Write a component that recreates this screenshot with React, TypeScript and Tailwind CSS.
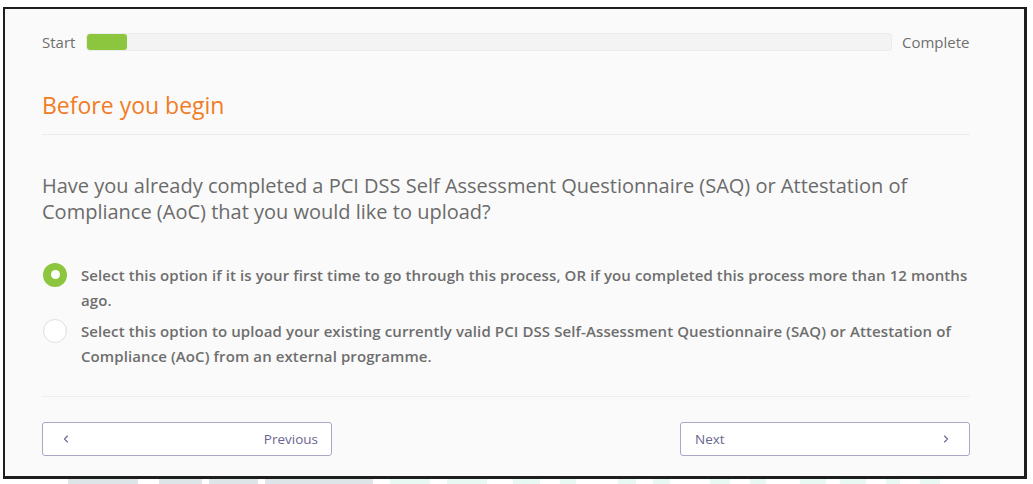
import { ChevronLeft, ChevronRight } from 'lucide-react';

const stripBlocks = [
    { x: 68, w: 70, c: 'bg-[#dde5e8]' },
    { x: 159, w: 43, c: 'bg-[#dde5e8]' },
    { x: 209, w: 49, c: 'bg-[#dde5e8]' },
    { x: 265, w: 108, c: 'bg-[#dde5e8]' },
    { x: 390, w: 40, c: 'bg-[#e8f8f2]' },
    { x: 447, w: 40, c: 'bg-[#e8f8f2]' },
    { x: 513, w: 27, c: 'bg-[#e8f8f2]' },
    { x: 560, w: 16, c: 'bg-[#e8f8f2]' },
    { x: 618, w: 18, c: 'bg-[#e8f8f2]' },
    { x: 653, w: 17, c: 'bg-[#e8f8f2]' },
    { x: 710, w: 20, c: 'bg-[#e8f8f2]' },
    { x: 750, w: 16, c: 'bg-[#e8f8f2]' },
    { x: 800, w: 26, c: 'bg-[#e8f8f2]' },
    { x: 840, w: 26, c: 'bg-[#e8f8f2]' },
    { x: 886, w: 14, c: 'bg-[#e8f8f2]' },
    { x: 920, w: 20, c: 'bg-[#e8f8f2]' },
];

function Radio({ checked }: { checked?: boolean }) {
    return checked ? (
        <span className="mt-[-0.5px] flex h-6 w-6 shrink-0 items-center justify-center rounded-full bg-[#8cc63f]">
            <span className="h-[9px] w-[9px] rounded-full bg-white" />
        </span>
    ) : (
        <span className="mt-[-0.5px] h-6 w-6 shrink-0 rounded-full border-[1.5px] border-[#dedede] bg-white" />
    );
}

export default function App() {
    return (
        <div className="h-[484px] w-[1033px] overflow-hidden bg-white pt-[7px] pl-[3px] font-['Open_Sans',sans-serif]">
            <div className="h-[472px] w-[1024px] border-2 border-r-[3px] border-b-[3px] border-[#1e1e1e] bg-[#fafafa] pl-[37px]">
                <div className="w-[928px]">
                    {/* progress */}
                    <div className="mt-[24px] flex h-[18px] items-center text-[15px] text-[#6f6f6f]">
                        <span className="w-[44px]">Start</span>
                        <div className="h-[18px] w-[806px] overflow-hidden rounded-[3px] border border-[#ececec] bg-[#f3f3f3]">
                            <div className="h-full w-[40px] rounded-[3px] bg-[#8cc63f]" />
                        </div>
                        <span className="ml-[10px]">Complete</span>
                    </div>

                    <h1 className="mt-[39px] border-b border-[#ededed] pb-[14px] text-[23px] leading-[30px] text-[#f07d26]">
                        Before you begin
                    </h1>

                    <p className="mt-[38px] w-[900px] text-[20px] leading-[26px] text-[#6b6b6b]">
                        Have you already completed a PCI DSS Self Assessment Questionnaire (SAQ) or Attestation of
                        Compliance (AoC) that you would like to upload?
                    </p>

                    <div className="mt-[38px] flex flex-col gap-[6px] border-b border-[#ededed] pb-[27px]">
                        <label className="flex gap-[14px] pl-px">
                            <Radio checked />
                            <span className="text-[15px] leading-[25px] font-semibold tracking-[0.1px] text-[#6e6e6e]">
                                Select this option if it is your first time to go through this process, OR if you completed
                                this process more than 12 months ago.
                            </span>
                        </label>
                        <label className="flex gap-[14px] pl-px">
                            <Radio />
                            <span className="text-[15px] leading-[25px] font-semibold tracking-[0.1px] text-[#6e6e6e]">
                                Select this option to upload your existing currently valid PCI DSS Self-Assessment
                                Questionnaire (SAQ) or Attestation of Compliance (AoC) from an external programme.
                            </span>
                        </label>
                    </div>

                    <div className="mt-[25px] flex justify-between text-[13.5px] text-[#6b6591]">
                        <button className="flex h-[34px] w-[290px] items-center justify-between rounded-[3px] border border-[#aba5c8] bg-white pr-[13px] pl-[17px]">
                            <ChevronLeft size={12} strokeWidth={2.2} />
                            <span>Previous</span>
                        </button>
                        <button className="flex h-[34px] w-[290px] items-center justify-between rounded-[3px] border border-[#aba5c8] bg-white pr-[17px] pl-[14px]">
                            <span>Next</span>
                            <ChevronRight size={12} strokeWidth={2.2} />
                        </button>
                    </div>
                </div>
            </div>
            <div className="relative h-[5px]">
                {stripBlocks.map((b, i) => (
                    <span
                        key={i}
                        className={`absolute top-0 h-[5px] ${b.c}`}
                        style={{ left: b.x - 3, width: b.w }}
                    />
                ))}
            </div>
        </div>
    );
}
